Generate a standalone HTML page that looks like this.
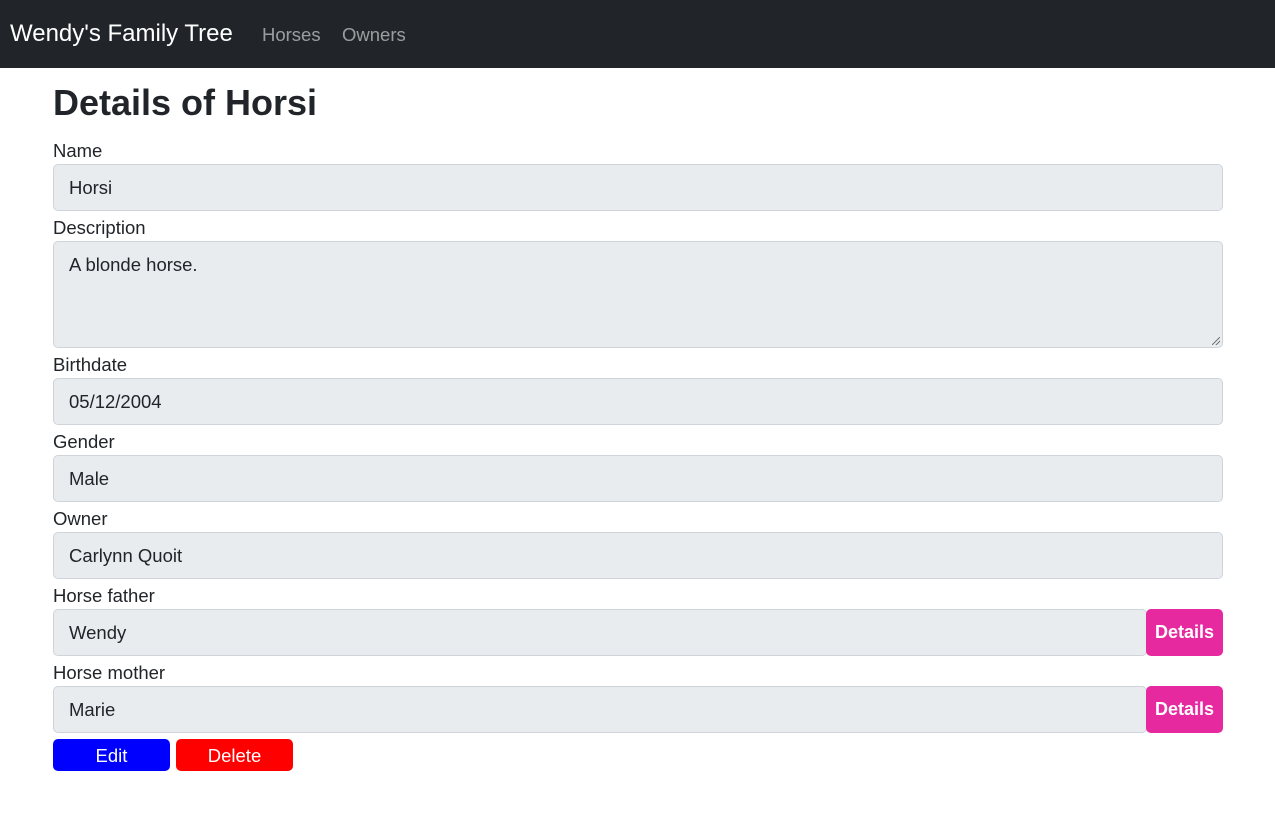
<!DOCTYPE html>
<html><head><meta charset="utf-8"><style>
*{box-sizing:border-box;margin:0;padding:0}
body{width:1275px;height:821px;background:#fff;font-family:"Liberation Sans",sans-serif;color:#212529;position:relative;overflow:hidden}
.nav{position:absolute;left:0;top:0;width:1275px;height:68px;background:#212529}
.brand{position:absolute;left:10px;top:20px;font-size:24px;color:#fff}
.nl{position:absolute;top:24px;font-size:18.5px;color:rgba(255,255,255,.55)}
h1{position:absolute;left:53px;top:81px;font-size:36px;font-weight:bold;line-height:44px}
.lb{position:absolute;left:53px;font-size:18.5px;line-height:22px}
.in{position:absolute;left:53px;width:1170px;height:47px;background:#e9ecef;border:1px solid #ced4da;border-radius:5px;font-size:18.5px;padding:12px 15px;line-height:22px}
.d{position:absolute;left:1146px;width:77px;height:47px;background:#e7299f;color:#fff;border-radius:5px;font-weight:bold;font-size:18px;text-align:center;line-height:47px}
.b{position:absolute;top:739px;width:117px;height:32px;color:#fff;border-radius:5px;font-size:18.5px;text-align:center;line-height:33px}
.rh{position:absolute;left:1212px;top:337px;width:8px;height:8px;background:linear-gradient(135deg,transparent 45%,#777 45%,#777 55%,transparent 55%,transparent 70%,#777 70%,#777 80%,transparent 80%)}
</style></head><body>
<div class="nav"><span class="brand">Wendy's Family Tree</span><span class="nl" style="left:262px">Horses</span><span class="nl" style="left:342px">Owners</span></div>
<h1>Details of Horsi</h1>
<div class="lb" style="top:140px">Name</div><div class="in" style="top:164px">Horsi</div>
<div class="lb" style="top:217px">Description</div><div class="in" style="top:241px;height:107px">A blonde horse.</div><div class="rh"></div>
<div class="lb" style="top:354px">Birthdate</div><div class="in" style="top:378px">05/12/2004</div>
<div class="lb" style="top:431px">Gender</div><div class="in" style="top:455px">Male</div>
<div class="lb" style="top:508px">Owner</div><div class="in" style="top:532px">Carlynn Quoit</div>
<div class="lb" style="top:585px">Horse father</div><div class="in" style="top:609px;width:1094px">Wendy</div><div class="d" style="top:609px">Details</div>
<div class="lb" style="top:662px">Horse mother</div><div class="in" style="top:686px;width:1094px">Marie</div><div class="d" style="top:686px">Details</div>
<div class="b" style="left:53px;background:#0000ff">Edit</div>
<div class="b" style="left:176px;background:#ff0000">Delete</div>
</body></html>
